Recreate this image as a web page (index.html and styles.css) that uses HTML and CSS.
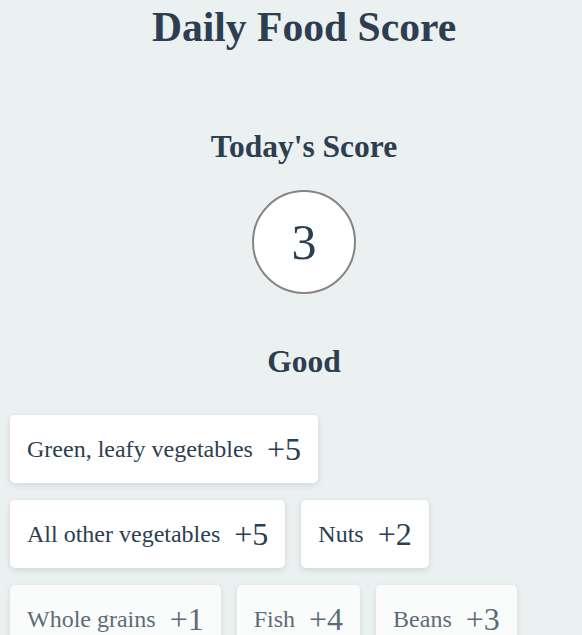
FILE: index.html
```html
<!DOCTYPE html>
<html>
<head>
<meta charset="utf-8">
<link rel="stylesheet" href="styles.css">
</head>
<body>
<main class="app">
  <h1 class="title">Daily Food Score</h1>
  <section class="score">
    <h2 class="score-label">Today's Score</h2>
    <div class="score-circle">3</div>
  </section>
  <section class="group">
    <h2 class="group-title">Good</h2>
    <div class="cards">
      <div class="card"><span class="name">Green, leafy vegetables</span><span class="pts">+5</span></div>
      <div class="card"><span class="name">All other vegetables</span><span class="pts">+5</span></div>
      <div class="card"><span class="name">Nuts</span><span class="pts">+2</span></div>
      <div class="card faded"><span class="name">Whole grains</span><span class="pts">+1</span></div>
      <div class="card faded"><span class="name">Fish</span><span class="pts">+4</span></div>
      <div class="card faded"><span class="name">Beans</span><span class="pts">+3</span></div>
    </div>
  </section>
</main>
</body>
</html>
```

FILE: styles.css
```css
html, body {
  margin: 0;
  padding: 0;
  background: #ebf0f0;
  color: #2c3e50;
  font-family: "Liberation Serif", "Times New Roman", serif;
  height: 635px;
  overflow: hidden;
}
.app {
  width: 608px;
  display: flex;
  flex-direction: column;
  align-items: center;
}
.title {
  margin: 3px 0 0;
  font-size: 41.6px;
  line-height: 48px;
  font-weight: bold;
}
.score {
  display: flex;
  flex-direction: column;
  align-items: center;
  margin-top: 78px;
}
.score-label {
  margin: 0;
  font-size: 31.5px;
  line-height: 36px;
}
.score-label, .group-title {
  font-weight: bold;
}
.score-circle {
  margin-top: 25px;
  width: 100px;
  height: 100px;
  border: 2.5px solid #858585;
  border-radius: 50%;
  background: #fff;
  display: flex;
  align-items: center;
  justify-content: center;
  font-size: 50px;
}
.group {
  align-self: stretch;
  display: flex;
  flex-direction: column;
  align-items: center;
}
.group-title {
  margin: 50px 0 0;
  font-size: 31.5px;
  line-height: 36px;
}
.cards {
  align-self: stretch;
  display: flex;
  flex-wrap: wrap;
  gap: 17px 16px;
  padding: 0 36px 0 10px;
  margin-top: 35px;
}
.card {
  background: #fff;
  border-radius: 5px;
  box-shadow: 0 2px 6px rgba(0, 0, 0, 0.12);
  padding: 16px 17px;
  height: 36px;
  display: flex;
  align-items: center;
  gap: 14px;
}
.name {
  font-size: 24px;
}
.pts {
  font-size: 32px;
}
.card.faded {
  opacity: 0.75;
}
```
